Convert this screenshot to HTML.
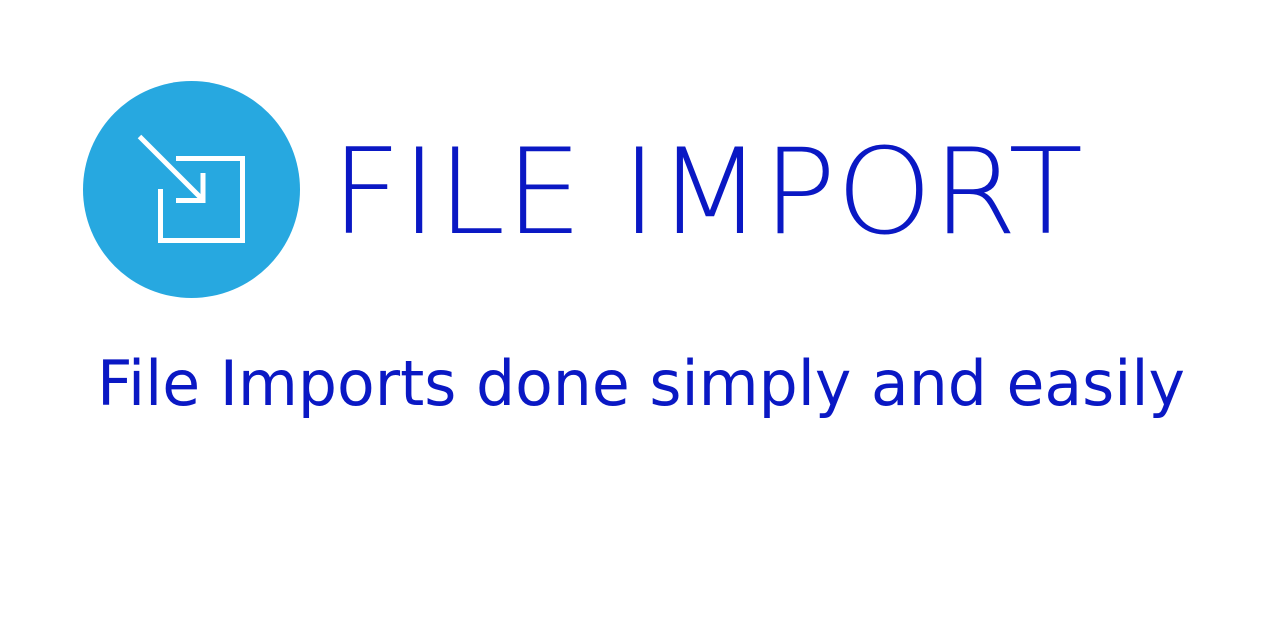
<!DOCTYPE html>
<html><head><style>html,body{margin:0;padding:0;background:#fff;width:1280px;height:640px;overflow:hidden}</style></head>
<body>
<svg width="1280" height="640" xmlns="http://www.w3.org/2000/svg">
<circle cx="191.5" cy="189.5" r="108.5" fill="#27a8e0"/>
<g fill="none" stroke="#fff" stroke-width="5">
<path d="M160.5 189 V240.5 H242.5 V158.5 H176"/>
<path d="M139.5 136.5 L201 198"/>
<path d="M203 173 V200.5 H176"/>
</g>
<text x="331" y="233" font-family="DejaVu Sans, Liberation Sans, sans-serif" font-weight="200" font-size="119" fill="#0a18c4" textLength="752" lengthAdjust="spacingAndGlyphs">FILE IMPORT</text>
<text x="97" y="405" font-family="DejaVu Sans, Liberation Sans, sans-serif" font-size="62" fill="#0a18c4" textLength="1088" lengthAdjust="spacingAndGlyphs">File Imports done simply and easily</text>
</svg>
</body></html>
